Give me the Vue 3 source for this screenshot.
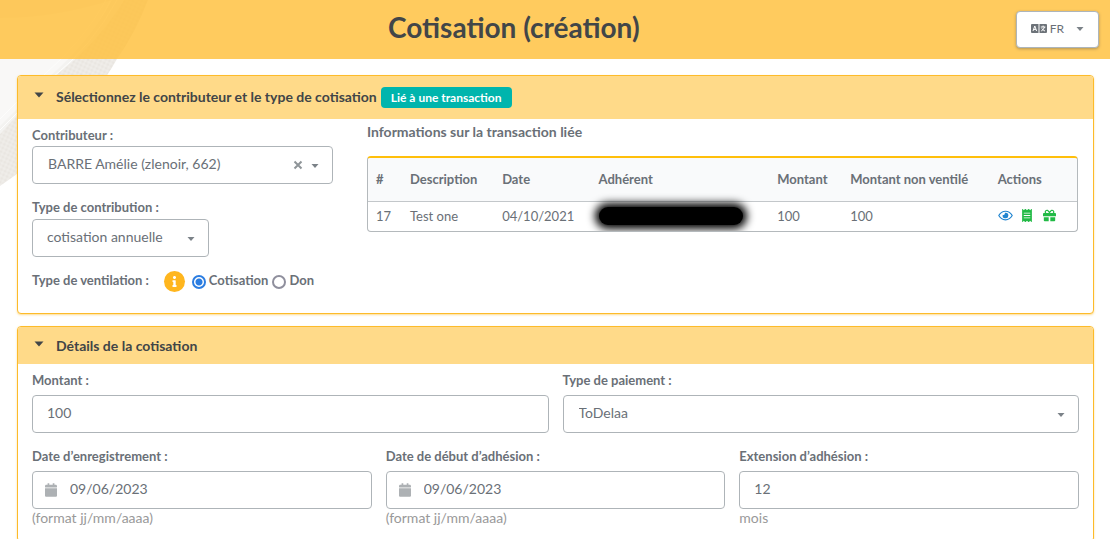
<script setup>
import { ref } from 'vue'

const contributor = ref('662')
const contributionType = ref('annual')
const allocation = ref('cotisation')
const amount = ref('100')
const payment = ref('todelaa')
const registered = ref('09/06/2023')
const started = ref('09/06/2023')
const extension = ref('12')
const firstOpen = ref(true)
const secondOpen = ref(true)
</script>

<template>
  <div class="page">
    <svg class="backdrop" viewBox="0 0 160 190" aria-hidden="true">
      <defs>
        <pattern id="weave" width="4" height="4" patternUnits="userSpaceOnUse" patternTransform="rotate(25)">
          <rect width="4" height="4" fill="#edeae6" />
          <circle cx="1" cy="1" r="1" fill="#e8e5e0" />
          <circle cx="3" cy="3" r="1" fill="#f0eeeb" />
        </pattern>
      </defs>
      <path d="M0 0H110Q92 40 52 75L0 130Z" fill="#f9f8f7" />
      <path d="M0 18Q55 18 112 0H0Z" fill="#f1efec" />
      <path d="M112 0Q88 44 48 78L0 126V134L52 82Q95 48 124 0Z" fill="#f4f3f1" />
      <path d="M124 0H148Q136 32 117 59Q98 93 54 141Q30 166 0 186V134L52 78Q96 46 124 0Z" fill="url(#weave)" />
      <path d="M106 0Q84 40 45 74L0 119M117 0Q92 46 52 78L0 130" fill="none" stroke="#fdfdfc" stroke-width="1" />
    </svg>

    <header class="topbar">
      <h1>Cotisation (création)</h1>
      <button class="lang" type="button" aria-haspopup="true">
        <svg class="lang-icon" viewBox="0 0 16 9" aria-hidden="true">
          <path d="M1 0H7.5V9H1Q0 9 0 8V1Q0 0 1 0ZM8.5 0H15Q16 0 16 1V8Q16 9 15 9H8.5Z" fill="#6d7379" />
          <path d="M2 7 3.8 2 5.6 7M2.7 5.4H4.9M9.8 3H14.4M12.1 1.6V3M13.5 3Q12.8 5.8 10.2 7M10.8 4.4Q12 6.4 14 7" fill="none" stroke="#fff" stroke-width="1" />
        </svg>
        <span>FR</span>
        <svg class="caret" viewBox="0 0 8 4" aria-hidden="true"><path d="M0.5 0H7.5L4 4Z" /></svg>
      </button>
    </header>

    <main class="content">
      <section class="card">
        <h2 class="card-head">
          <button type="button" class="toggle tall" :aria-expanded="firstOpen" @click="firstOpen = !firstOpen">
            <svg class="fold" viewBox="0 0 10 6" aria-hidden="true"><path d="M0.5 0.5H9.5L5 5.5Z" /></svg>
            <span>Sélectionnez le contributeur et le type de cotisation</span>
            <span class="tag">Lié à une transaction</span>
          </button>
        </h2>
        <div v-show="firstOpen" class="split">
          <div class="side">
            <label for="contributor">Contributeur :</label>
            <div class="control wide">
              <select id="contributor" v-model="contributor" class="padded">
                <option value="662">BARRE Amélie (zlenoir, 662)</option>
              </select>
              <button class="clear" type="button" aria-label="Effacer">
                <svg viewBox="0 0 10 10" aria-hidden="true"><path d="M1.5 1.5 8.5 8.5M8.5 1.5 1.5 8.5" /></svg>
              </button>
              <svg class="caret over" viewBox="0 0 8 4" aria-hidden="true"><path d="M0.5 0H7.5L4 4Z" /></svg>
            </div>
            <label for="contribution-type" class="spaced">Type de contribution :</label>
            <div class="control narrow">
              <select id="contribution-type" v-model="contributionType">
                <option value="annual">cotisation annuelle</option>
              </select>
              <svg class="caret over" viewBox="0 0 8 4" aria-hidden="true"><path d="M0.5 0H7.5L4 4Z" /></svg>
            </div>
            <div class="allocation" role="radiogroup" aria-labelledby="allocation-label">
              <span id="allocation-label" class="raised">Type de ventilation :</span>
              <span class="info">
                <svg viewBox="0 0 192 512" aria-hidden="true"><path d="M20 424h20V280H20c-11 0-20-9-20-20v-48c0-11 9-20 20-20h112c11 0 20 9 20 20v212h20c11 0 20 9 20 20v48c0 11-9 20-20 20H20c-11 0-20-9-20-20v-48c0-11 9-20 20-20zM96 0C56 0 24 32 24 72s32 72 72 72 72-32 72-72S136 0 96 0z" /></svg>
              </span>
              <input id="kind-fee" v-model="allocation" type="radio" name="allocation" value="cotisation" />
              <label for="kind-fee" class="raised">Cotisation</label>
              <input id="kind-gift" v-model="allocation" type="radio" name="allocation" value="don" />
              <label for="kind-gift" class="raised">Don</label>
            </div>
          </div>

          <div class="main">
            <h3>Informations sur la transaction liée</h3>
            <div class="table-frame">
              <table>
                <colgroup>
                  <col class="c-id" /><col class="c-desc" /><col class="c-date" /><col class="c-member" />
                  <col class="c-amount" /><col class="c-rest" /><col class="c-actions" />
                </colgroup>
                <thead>
                  <tr>
                    <th>#</th><th>Description</th><th>Date</th><th>Adhérent</th>
                    <th>Montant</th><th>Montant non ventilé</th><th>Actions</th>
                  </tr>
                </thead>
                <tbody>
                  <tr>
                    <td>17</td><td>Test one</td><td>04/10/2021</td>
                    <td><span class="redacted"></span></td>
                    <td>100</td><td>100</td>
                    <td>
                      <div class="actions">
                        <a href="#" class="blue" aria-label="Voir">
                          <svg viewBox="0 0 576 512" width="15" height="13"><path d="M288 144a110.94 110.94 0 0 0-31.24 5 55.4 55.4 0 0 1 7.24 27 56 56 0 0 1-56 56 55.4 55.4 0 0 1-27-7.24A111.71 111.71 0 1 0 288 144zm284.52 97.4C518.29 135.59 410.93 64 288 64S57.68 135.64 3.48 241.41a32.35 32.35 0 0 0 0 29.19C57.71 376.41 165.07 448 288 448s230.32-71.64 284.52-177.41a32.35 32.35 0 0 0 0-29.19zM288 400c-98.65 0-189.09-55-237.93-144C98.91 167 189.34 112 288 112s189.09 55 237.93 144C477.1 345 386.66 400 288 400z" /></svg>
                        </a>
                        <a href="#" class="green" aria-label="Cotisation">
                          <svg viewBox="0 0 384 512" width="10" height="13"><path fill-rule="evenodd" d="M358.4 3.2L320 48 265.6 3.2a15.9 15.9 0 0 0-19.2 0L192 48 137.6 3.2a15.9 15.9 0 0 0-19.2 0L64 48 25.6 3.2C15-4.7 0 2.8 0 16v480c0 13.2 15 20.7 25.6 12.8L64 464l54.4 44.8a15.9 15.9 0 0 0 19.2 0L192 464l54.4 44.8a15.9 15.9 0 0 0 19.2 0L320 464l38.4 44.8c10.5 7.9 25.6.4 25.6-12.8V16c0-13.2-15-20.7-25.6-12.8zM64 330h256v38H64zM64 237h256v38H64zM64 144h256v38H64z" /></svg>
                        </a>
                        <a href="#" class="green" aria-label="Don">
                          <svg viewBox="0 0 512 512" width="13" height="13"><path d="M32 448c0 17.7 14.3 32 32 32h160V320H32v128zm256 32h160c17.7 0 32-14.3 32-32V320H288v160zm192-320h-42.1c6.2-12.1 10.1-25.5 10.1-40 0-48.5-39.5-88-88-88-41.6 0-68.5 21.3-103 68.3-34.5-47-61.4-68.3-103-68.3-48.5 0-88 39.5-88 88 0 14.5 3.8 27.9 10.1 40H32c-17.7 0-32 14.3-32 32v80c0 8.8 7.2 16 16 16h480c8.8 0 16-7.2 16-16v-80c0-17.7-14.3-32-32-32zm-326.1 0c-22.1 0-40-17.9-40-40s17.9-40 40-40c19.9 0 34.6 3.3 86.1 80h-86.1zm206.1 0h-86.1c51.4-76.5 65.7-80 86.1-80 22.1 0 40 17.9 40 40s-17.9 40-40 40z" /></svg>
                        </a>
                      </div>
                    </td>
                  </tr>
                </tbody>
              </table>
            </div>
          </div>
        </div>
      </section>

      <section class="card">
        <h2 class="card-head">
          <button type="button" class="toggle" :aria-expanded="secondOpen" @click="secondOpen = !secondOpen">
            <svg class="fold" viewBox="0 0 10 6" aria-hidden="true"><path d="M0.5 0.5H9.5L5 5.5Z" /></svg>
            <span>Détails de la cotisation</span>
          </button>
        </h2>
        <div v-show="secondOpen" class="details">
          <div class="row two">
            <div class="field">
              <label for="amount">Montant :</label>
              <input id="amount" v-model="amount" type="text" />
            </div>
            <div class="field">
              <label for="payment">Type de paiement :</label>
              <div class="control">
                <select id="payment" v-model="payment" class="padded">
                  <option value="todelaa">ToDelaa</option>
                </select>
                <svg class="caret over" viewBox="0 0 8 4" aria-hidden="true"><path d="M0.5 0H7.5L4 4Z" /></svg>
              </div>
            </div>
          </div>
          <div class="row three">
            <div class="field">
              <label for="registered">Date d’enregistrement :</label>
              <div class="control">
                <svg class="calendar" viewBox="0 0 448 512" aria-hidden="true"><path d="M12 192h424c6.6 0 12 5.4 12 12v260c0 26.5-21.5 48-48 48H48c-26.5 0-48-21.5-48-48V204c0-6.6 5.4-12 12-12zm436-44v-36c0-26.5-21.5-48-48-48h-48V12c0-6.6-5.4-12-12-12h-40c-6.6 0-12 5.4-12 12v52H160V12c0-6.6-5.4-12-12-12h-40c-6.6 0-12 5.4-12 12v52H48C21.5 64 0 85.5 0 112v36c0 6.6 5.4 12 12 12h424c6.6 0 12-5.4 12-12z" /></svg>
                <input id="registered" v-model="registered" type="text" class="dated" />
              </div>
              <span class="hint">(format jj/mm/aaaa)</span>
            </div>
            <div class="field">
              <label for="started">Date de début d’adhésion :</label>
              <div class="control">
                <svg class="calendar" viewBox="0 0 448 512" aria-hidden="true"><path d="M12 192h424c6.6 0 12 5.4 12 12v260c0 26.5-21.5 48-48 48H48c-26.5 0-48-21.5-48-48V204c0-6.6 5.4-12 12-12zm436-44v-36c0-26.5-21.5-48-48-48h-48V12c0-6.6-5.4-12-12-12h-40c-6.6 0-12 5.4-12 12v52H160V12c0-6.6-5.4-12-12-12h-40c-6.6 0-12 5.4-12 12v52H48C21.5 64 0 85.5 0 112v36c0 6.6 5.4 12 12 12h424c6.6 0 12-5.4 12-12z" /></svg>
                <input id="started" v-model="started" type="text" class="dated" />
              </div>
              <span class="hint">(format jj/mm/aaaa)</span>
            </div>
            <div class="field">
              <label for="extension">Extension d’adhésion :</label>
              <input id="extension" v-model="extension" type="text" />
              <span class="hint">mois</span>
            </div>
          </div>
        </div>
      </section>
    </main>
  </div>
</template>

<style>
body {
  margin: 0;
  background: #fff;
}
</style>

<style scoped>
.page {
  position: relative;
  font-family: Lato, sans-serif;
  font-size: 14px;
  line-height: 20px;
  color: #6a7077;
}
.page *,
.page *::before {
  box-sizing: border-box;
}
.page button,
.page input,
.page select {
  font-family: inherit;
  color: inherit;
  margin: 0;
}
.backdrop {
  position: absolute;
  top: 0;
  left: 0;
  width: 160px;
  height: 190px;
}
.topbar {
  position: relative;
  display: flex;
  align-items: center;
  height: 59px;
  padding: 0 11px 0 12px;
  background: rgba(255, 191, 58, 0.82);
}
h1 {
  flex: 1;
  margin: 0;
  padding-bottom: 6px;
  text-align: center;
  font-size: 28px;
  line-height: 36px;
  font-weight: 700;
  color: #424648;
}
.lang {
  display: flex;
  align-items: center;
  height: 37px;
  padding: 0 14px 2px;
  border: 1px solid #adb5bb;
  border-radius: 4px;
  background: #fff;
  box-shadow: 0 1px 3px rgba(60, 70, 80, 0.4);
  font-size: 12px;
}
.lang-icon {
  width: 16px;
  height: 9px;
  margin-right: 3px;
}
.lang .caret {
  margin-left: 12px;
}
.caret {
  width: 8px;
  height: 4px;
  fill: #7b8288;
}
.content {
  position: relative;
  display: grid;
  gap: 12px;
  padding: 16px 16px 0 17px;
}
.card {
  border: 1px solid #fdbb2a;
  border-radius: 4px;
  background: #fff;
  box-shadow: 0 1px 2px rgba(253, 187, 42, 0.5);
  overflow: hidden;
}
.card-head {
  margin: 0;
}
.toggle {
  display: flex;
  align-items: center;
  width: 100%;
  min-height: 37px;
  padding: 0 16px;
  border: 0;
  background: #ffda89;
  text-align: left;
  font-size: 14px;
  line-height: 20px;
  font-weight: 700;
}
.toggle span {
  color: #414547;
}
.tall {
  min-height: 43px;
  padding-bottom: 1px;
}
.fold {
  width: 10px;
  height: 6px;
  margin: 0 12px 4px 0;
  fill: #414547;
}
.toggle .tag {
  margin-left: 4px;
  padding: 0 10px;
  border-radius: 4px;
  background: #00b5ad;
  color: #fff;
  font-size: 12px;
  line-height: 21px;
}
.split {
  display: grid;
  grid-template-columns: 5fr 11fr;
}
.side {
  padding: 7px 21px 21px 14px;
}
.main {
  padding: 3px 15px 14px 13px;
}
label,
.allocation {
  font-size: 13px;
  line-height: 18px;
  font-weight: 700;
}
.side > label {
  display: block;
  margin-bottom: 2px;
}
.side > .spaced {
  margin-top: 14px;
  margin-bottom: 3px;
}
.control {
  position: relative;
}
.narrow {
  width: 177px;
}
input[type='text'],
select {
  display: block;
  width: 100%;
  height: 38px;
  padding: 0 14px 4px;
  border: 1px solid #aeb4b8;
  border-radius: 4px;
  background: #fff;
  font-size: 14px;
  appearance: none;
}
select.padded {
  padding-left: 15px;
}
.over {
  position: absolute;
  right: 14px;
  top: 18px;
  pointer-events: none;
}
.clear {
  position: absolute;
  right: 28px;
  top: 12px;
  display: grid;
  place-items: center;
  width: 14px;
  height: 14px;
  padding: 0;
  border: 0;
  background: none;
}
.clear svg {
  width: 10px;
  height: 10px;
  fill: none;
  stroke: #8f9599;
  stroke-width: 2;
}
.allocation {
  display: flex;
  align-items: center;
  height: 21px;
  margin-top: 14px;
}
.raised {
  padding-bottom: 3px;
}
.info {
  display: grid;
  place-items: center;
  width: 21px;
  height: 21px;
  margin: 0 7px 0 15px;
  border-radius: 50%;
  background: #ffb61e;
}
.info svg {
  width: 5px;
  height: 11px;
  fill: #fff;
}
input[type='radio'] {
  width: 14px;
  height: 14px;
  border: 2px solid #8f8f9d;
  border-radius: 50%;
  background: #fff;
  appearance: none;
}
input[type='radio']:checked {
  border-color: #2b7de1;
  background: radial-gradient(circle, #2b7de1 3px, #fff 4px);
}
.allocation label {
  margin: 0 4px 0 3px;
}
h3 {
  margin: 0 0 15px;
  font-size: 14px;
  line-height: 19px;
  font-weight: 700;
}
.table-frame {
  border: 1px solid #b4b9bc;
  border-top: 2px solid #ffbf0b;
  border-radius: 4px;
  overflow: hidden;
}
table {
  width: 100%;
  table-layout: fixed;
  border-collapse: separate;
  border-spacing: 0;
  font-size: 13px;
  line-height: 18px;
}
.c-id { width: 4.8%; }
.c-desc { width: 13%; }
.c-date { width: 13.6%; }
.c-member { width: 25.2%; }
.c-amount { width: 10.3%; }
.c-rest { width: 20.8%; }
th,
td {
  padding: 0 0 2px 8px;
  text-align: left;
  white-space: nowrap;
}
th {
  height: 44px;
  border-bottom: 1px solid #c3c7ca;
  background: #f9fafb;
  font-weight: 700;
}
td {
  height: 29px;
}
.redacted {
  display: block;
  width: 144px;
  height: 18px;
  border-radius: 9px;
  background: #000;
  box-shadow: 0 0 8px 4px #000;
}
.actions {
  display: flex;
  align-items: center;
  gap: 7px;
}
.actions a {
  display: flex;
  justify-content: center;
  width: 15px;
}
.actions svg {
  fill: currentColor;
}
.blue {
  color: #2185d0;
}
.green {
  color: #21ba45;
}
.details {
  display: grid;
  gap: 14px;
  padding: 7px 14px 14px;
}
.row {
  display: grid;
  gap: 14px;
}
.two {
  grid-template-columns: 1fr 1fr;
}
.three {
  grid-template-columns: 1fr 1fr 1fr;
}
.field label {
  display: block;
  margin-bottom: 6px;
}
.hint {
  display: block;
  font-size: 14px;
  line-height: 18px;
  color: #999;
}
.calendar {
  position: absolute;
  left: 13px;
  top: 12px;
  width: 12px;
  height: 14px;
  fill: #adb1b4;
}
input.dated {
  padding-left: 37px;
}
</style>
